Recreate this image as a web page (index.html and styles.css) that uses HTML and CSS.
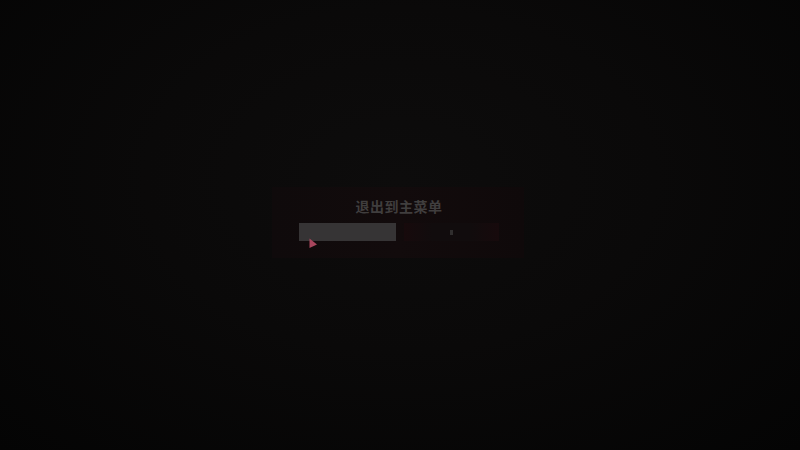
FILE: index.html
```html
<!DOCTYPE html>
<html lang="zh-CN">
<head>
  <meta charset="UTF-8">
  <meta name="viewport" content="width=device-width, initial-scale=1.0">
  <title>退出到主菜单</title>
  <link rel="stylesheet" href="styles.css">
</head>
<body>
  <div class="scene">
    <div class="overlay">
      <div class="dialog">
        <div class="dialog-title">退出到主菜单</div>
        <div class="dialog-actions">
          <button type="button" class="btn btn-confirm"></button>
          <button type="button" class="btn btn-cancel"><span class="btn-mark"></span></button>
        </div>
      </div>
    </div>
    <svg class="cursor" width="9" height="11" viewBox="0 0 9 11">
      <path d="M0.5 0.5 L0.5 10 L8 6.5 Z" fill="#a8465d"/>
    </svg>
  </div>
</body>
</html>
```

FILE: styles.css
```css
body {
  margin: 0;
  background-color: #050505;
  font-family: "Noto Sans CJK SC", "Noto Sans", sans-serif;
}
.scene {
  position: relative;
  width: 800px;
  height: 450px;
  overflow: hidden;
  background: radial-gradient(ellipse at 50% 40%, #0d0c0c 0%, #0a0909 45%, #040404 100%);
}
.overlay {
  height: 100%;
  display: flex;
  align-items: flex-start;
  justify-content: center;
  padding-top: 187px;
  padding-right: 4px;
  box-sizing: border-box;
}
.dialog {
  width: 252px;
  box-sizing: border-box;
  padding: 10px 25px 17px 27px;
  background: linear-gradient(90deg, #0f0a0b 0%, #120b0c 50%, #0f090a 100%);
  display: flex;
  flex-direction: column;
  gap: 8px;
}
.dialog-title {
  text-align: center;
  color: #403e3e;
  font-size: 14px;
  font-weight: 700;
  line-height: 18px;
  letter-spacing: 0.5px;
}
.dialog-actions {
  display: flex;
  gap: 8px;
}
.btn {
  width: 97px;
  height: 18px;
  border: 0;
  padding: 0;
  display: flex;
  align-items: center;
  justify-content: center;
}
.btn-confirm {
  background-color: #363435;
}
.btn-cancel {
  width: 96px;
  background: linear-gradient(90deg, #170a0c 0%, #110c0d 30%, #110c0d 70%, #170a0c 100%);
}
.btn-mark {
  width: 3px;
  height: 5px;
  background-color: #302e2e;
}
.cursor {
  position: absolute;
  left: 309px;
  top: 238px;
}
```
